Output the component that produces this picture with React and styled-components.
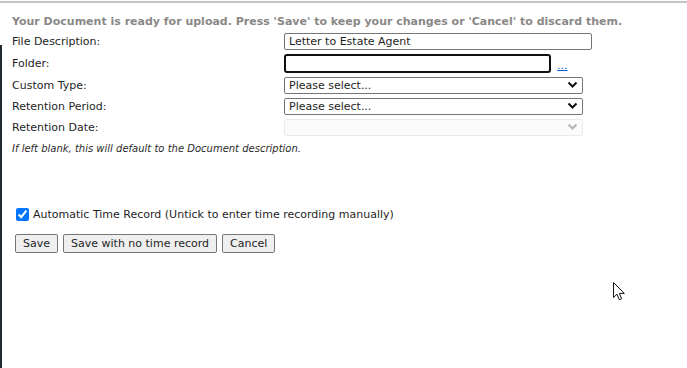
import React from 'react';
import styled, { createGlobalStyle } from 'styled-components';

const GlobalStyle = createGlobalStyle`
  html, body {
    margin: 0;
    background: #fff;
  }
  body {
    font-family: "DejaVu Sans", Verdana, sans-serif;
    font-size: 11px;
    color: #1e1e24;
  }
`;

// whole frame, grey rule on top and dark edge on the left
const Page = styled.div`
  position: relative;
  width: 687px;
  box-sizing: border-box;
  border-top: 2px solid #c4c4c4;
  margin-top: 1px;
  height: 367px;
  padding: 12px 0 0 12px;
  overflow: hidden;

  &::before {
    content: '';
    position: absolute;
    left: 0;
    top: 42px;
    bottom: 0;
    width: 2px;
    background: #232a30;
  }
`;

const Notice = styled.div`
  font-weight: bold;
  color: #8a8886;
  height: 14px;
  line-height: 14px;
  white-space: nowrap;
`;

const Form = styled.div`
  display: grid;
  grid-template-columns: 272px auto;
  grid-template-rows: 22px 23px 21px 21px 21px;
  align-items: center;
  margin-top: 1px;
`;

const Label = styled.div`
  color: #1e1e24;
`;

const Field = styled.div`
  display: flex;
  align-items: center;
  gap: 6px;
`;

const TextBox = styled.input`
  box-sizing: border-box;
  width: ${p => p.$w}px;
  height: ${p => (p.$focus ? 19 : 17)}px;
  border: ${p => (p.$focus ? '2px solid #101010' : '1px solid #767676')};
  border-radius: ${p => (p.$focus ? 3 : 2)}px;
  padding: 0 4px;
  font: inherit;
  font-size: 11px;
  color: #1e1e24;
  background: #fff;
  outline: none;
`;

const Dots = styled.a`
  color: #0b5fd8;
  text-decoration: underline;
  margin-top: 4px;
`;

const SelectWrap = styled.div`
  position: relative;
  width: 299px;
  height: 17px;
`;

const Select = styled.select`
  appearance: none;
  box-sizing: border-box;
  width: 100%;
  height: 100%;
  border: 1px solid ${p => (p.disabled ? '#e3e3e3' : '#767676')};
  border-radius: 2px;
  background: ${p => (p.disabled ? '#fafafa' : '#fff')};
  font: inherit;
  font-size: 11px;
  color: #1e1e24;
  padding: 0 0 0 4px;
  line-height: 15px;
`;

const Chevron = styled.svg`
  position: absolute;
  right: 5px;
  top: 4px;
  pointer-events: none;
`;

const Hint = styled.div`
  font-style: italic;
  font-size: 10px;
  color: #2a2a2a;
  margin-top: 5px;
`;

const CheckRow = styled.label`
  display: flex;
  align-items: center;
  gap: 4px;
  margin: 54px 0 0 4px;
  color: #1e1e24;
`;

const Check = styled.input`
  width: 13px;
  height: 13px;
  margin: 0;
  accent-color: #0075ff;
`;

const Buttons = styled.div`
  display: flex;
  gap: 5px;
  margin: 13px 0 0 3px;
`;

const Button = styled.button`
  height: 19px;
  padding: 0 7px;
  border: 1px solid #767676;
  border-radius: 2px;
  background: #efefef;
  font: inherit;
  font-size: 11px;
  color: #1e1e24;
  line-height: 17px;
`;

const Cursor = styled.svg`
  position: absolute;
  left: 613px;
  top: 279px;
`;

const DropSelect = ({ disabled }) => (
  <SelectWrap>
    <Select disabled={disabled} defaultValue="">
      <option value="">{disabled ? '' : 'Please select...'}</option>
    </Select>
    <Chevron width="11" height="8" viewBox="0 0 11 8">
      <path
        d="M1.5 1.5 L5.5 5.5 L9.5 1.5"
        fill="none"
        stroke={disabled ? '#b4b4b4' : '#111'}
        strokeWidth="2"
      />
    </Chevron>
  </SelectWrap>
);

const App = () => {
  return (
    <Page>
      <GlobalStyle />
      <Notice>
        Your Document is ready for upload. Press 'Save' to keep your changes or 'Cancel' to discard them.
      </Notice>
      <Form>
        <Label>File Description:</Label>
        <Field>
          <TextBox $w={308} defaultValue="Letter to Estate Agent" />
        </Field>
        <Label>Folder:</Label>
        <Field>
          <TextBox $w={267} $focus />
          <Dots href="#">...</Dots>
        </Field>
        <Label>Custom Type:</Label>
        <Field>
          <DropSelect />
        </Field>
        <Label>Retention Period:</Label>
        <Field>
          <DropSelect />
        </Field>
        <Label>Retention Date:</Label>
        <Field>
          <DropSelect disabled />
        </Field>
      </Form>
      <Hint>If left blank, this will default to the Document description.</Hint>
      <CheckRow>
        <Check type="checkbox" defaultChecked />
        Automatic Time Record (Untick to enter time recording manually)
      </CheckRow>
      <Buttons>
        <Button>Save</Button>
        <Button>Save with no time record</Button>
        <Button>Cancel</Button>
      </Buttons>
      <Cursor width="13" height="20" viewBox="0 0 13 20">
        <path
          d="M0.5 0.5 L0.5 15.5 L4 12.2 L6.3 17.8 L8.6 16.8 L6.4 11.4 L11.3 11.4 Z"
          fill="#fff"
          stroke="#111"
          strokeWidth="1"
          strokeLinejoin="round"
        />
      </Cursor>
    </Page>
  );
};

export default App;
